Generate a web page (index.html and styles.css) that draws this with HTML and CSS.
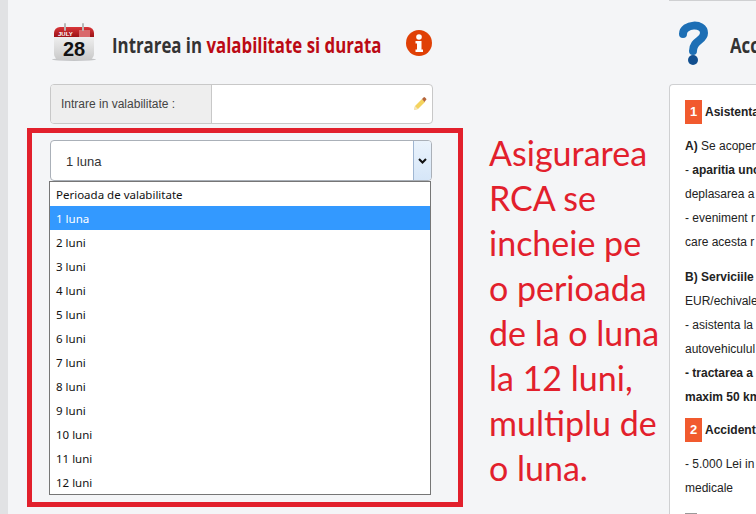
FILE: index.html
```html
<!DOCTYPE html>
<html lang="en">
<head>
    <meta charset="UTF-8">
    <meta name="viewport" content="width=device-width, initial-scale=1.0">
    <title>Asigurare RCA</title>
    <link rel="stylesheet" href="styles.css">
</head>
<body>
    <div class="page">
        <div class="col-left">
            <div class="heading">
                <svg class="icon-calendar" width="46" height="42" viewBox="0 0 46 42">
                    <defs>
                        <linearGradient id="calBody" x1="0" y1="0" x2="0" y2="1">
                            <stop offset="0" stop-color="#ffffff"/>
                            <stop offset="1" stop-color="#c9c9c9"/>
                        </linearGradient>
                        <linearGradient id="calTop" x1="0" y1="0" x2="0" y2="1">
                            <stop offset="0" stop-color="#d9363a"/>
                            <stop offset="1" stop-color="#9c1216"/>
                        </linearGradient>
                    </defs>
                    <ellipse cx="23" cy="37.500" rx="22" ry="1.500" fill="#c4c5c7"/>
                    <rect x="3" y="5" width="40" height="33" rx="6" fill="url(#calBody)"/>
                    <path d="M3 15V11a6 6 0 0 1 6-6h28a6 6 0 0 1 6 6v4z" fill="url(#calTop)"/>
                    <rect x="28" y="8" width="11" height="7" fill="#d9696b"/>
                    <rect x="13" y="1" width="2" height="8" rx="1" fill="#b8b8b8"/>
                    <rect x="31" y="1" width="2" height="8" rx="1" fill="#b8b8b8"/>
                    <text x="7" y="14" class="cal-month">JULY</text>
                    <text x="23" y="34" text-anchor="middle" class="cal-day">28</text>
                </svg>
                <div class="title-box">
                    <h2 class="title">Intrarea in <span class="title-red">valabilitate si durata</span></h2>
                </div>
                <svg class="icon-info" width="26" height="26" viewBox="0 0 26 26">
                    <circle cx="13" cy="13" r="13" fill="#e04006"/>
                    <circle cx="13" cy="7" r="2.800" fill="#fff"/>
                    <path d="M9.500 11h6v8.500h1.500V22H9.500v-2.500h1.500v-6H9.500z" fill="#fff"/>
                </svg>
            </div>

            <div class="input-group">
                <div class="input-label">Intrare in valabilitate :</div>
                <div class="input-field">
                    <svg width="14" height="14" viewBox="0 0 14 14">
                        <path d="M1 13l1-4 7-7 3 3-7 7z" fill="#f4d35e"/>
                        <path d="M9 2l1.500-1.500a1 1 0 0 1 1.500 0l1 1a1 1 0 0 1 0 1.500L11.500 5z" fill="#b5653a"/>
                        <path d="M1 13l1-4 3 3z" fill="#f3e4c0"/>
                    </svg>
                </div>
            </div>

            <div class="select-wrap">
                <div class="select-box">
                    <span class="select-value">1 luna</span>
                    <span class="select-arrow">
                        <svg width="9" height="6" viewBox="0 0 9 6">
                            <path d="M1 1l3.500 3.500L8 1" fill="none" stroke="#111" stroke-width="2"/>
                        </svg>
                    </span>
                </div>
                <ul class="select-list">
                    <li>Perioada de valabilitate</li>
                    <li class="active">1 luna</li>
                    <li>2 luni</li>
                    <li>3 luni</li>
                    <li>4 luni</li>
                    <li>5 luni</li>
                    <li>6 luni</li>
                    <li>7 luni</li>
                    <li>8 luni</li>
                    <li>9 luni</li>
                    <li>10 luni</li>
                    <li>11 luni</li>
                    <li>12 luni</li>
                </ul>
            </div>
        </div>

        <div class="col-right">
            <div class="heading heading-right">
                <svg class="icon-help" width="36" height="48" viewBox="0 0 36 48">
                    <path d="M8 15C8 5 29 3 29 14c0 8-11 7-11 18" fill="none" stroke="#f4f6f8" stroke-width="12" stroke-linecap="round"/>
                    <circle cx="18" cy="41" r="6.500" fill="#f4f6f8"/>
                    <path d="M8 15C8 5 29 3 29 14c0 8-11 7-11 18" fill="none" stroke="#1d6fb5" stroke-width="8" stroke-linecap="round"/>
                    <circle cx="18" cy="41" r="5" fill="#124f8f"/>
                </svg>
                <h2 class="title">Acc</h2>
            </div>
            <div class="panel">
                <div class="panel-head"><span class="badge">1</span><b>Asistenta</b></div>
                <p><b>A)</b> Se acoper</p>
                <p>- <b>aparitia unc</b></p>
                <p>deplasarea a</p>
                <p>- eveniment r</p>
                <p class="last">care acesta r</p>
                <p><b>B) Serviciile</b></p>
                <p>EUR/echivale</p>
                <p>- asistenta la</p>
                <p>autovehiculul</p>
                <p><b>- tractarea a</b></p>
                <p class="last last-b"><b>maxim 50 km</b></p>
                <div class="panel-head second"><span class="badge">2</span><b>Accident</b></div>
                <p>- 5.000 Lei in</p>
                <p>medicale</p>
                <div class="check"></div>
            </div>
        </div>
    </div>

    <div class="note-box"></div>
    <div class="note-text">Asigurarea<br>RCA se<br>incheie pe<br>o perioada<br>de la o luna<br>la 12 luni,<br>multiplu de<br>o luna.</div>
</body>
</html>
```

FILE: styles.css
```css
html, body {
    margin: 0;
    height: 100%;
    overflow: hidden;
}
body {
    font-family: "Liberation Sans", Arial, sans-serif;
    background-color: #f4f5f7;
    color: #333;
    border-left: 8px solid #e1e2e4;
    position: relative;
}
.page {
    display: flex;
    height: 514px;
    width: 748px;
}
.col-left {
    width: 383px;
    margin-left: 42px;
    flex-shrink: 0;
}
.col-right {
    width: 87px;
    margin-left: 236px;
    flex-shrink: 0;
    border-top: 1px solid #cfd0d2;
    height: 513px;
    overflow: hidden;
}
.heading {
    display: flex;
    align-items: center;
    height: 84px;
    padding-top: 3px;
    box-sizing: border-box;
}
.icon-calendar {
    margin-left: 1px;
    margin-right: 15px;
    margin-top: -2px;
    flex-shrink: 0;
}
.cal-month {
    font: bold 6px "Liberation Sans", sans-serif;
    fill: #fff;
}
.cal-day {
    font: bold 20px "Liberation Sans", sans-serif;
    fill: #111;
}
.title-box {
    width: 269px;
}
/* the original heading face is condensed, so squeeze a regular bold */
.title {
    margin: 0;
    font-family: "Open Sans", sans-serif;
    font-size: 22px;
    font-weight: bold;
    color: #333;
    white-space: nowrap;
    transform: scaleX(0.765);
    transform-origin: left center;
}
.title-red {
    color: #bb0a14;
}
.icon-info {
    margin-left: auto;
    margin-right: 1px;
    margin-top: -2px;
}
.input-group {
    display: flex;
    height: 40px;
    box-sizing: border-box;
    border: 1px solid #c8c8c8;
    border-radius: 4px;
    overflow: hidden;
    background-color: #fff;
    font-size: 12px;
}
.input-label {
    width: 161px;
    padding-left: 10px;
    box-sizing: border-box;
    background-color: #eee;
    border-right: 1px solid #c8c8c8;
    line-height: 38px;
    color: #444;
}
.input-field {
    flex: 1;
    display: flex;
    align-items: center;
    justify-content: flex-end;
    padding-right: 5px;
}
.select-wrap {
    position: relative;
    margin-top: 16px;
}
.select-box {
    display: flex;
    height: 41px;
    width: 382px;
    box-sizing: border-box;
    border: 1px solid #aab0b8;
    border-radius: 4px;
    background-color: #fff;
    font-size: 13px;
}
.select-value {
    flex: 1;
    line-height: 41px;
    padding-left: 15px;
}
.select-arrow {
    width: 17px;
    display: flex;
    align-items: center;
    justify-content: center;
    background: linear-gradient(#eaf3fc, #d6e6f8);
    border-left: 1px solid #9fb6d2;
    border-radius: 0 3px 3px 0;
}
.select-list {
    position: absolute;
    left: -1px;
    top: 41px;
    width: 382px;
    margin: 0;
    padding: 0;
    box-sizing: border-box;
    list-style: none;
    background-color: #fff;
    border: 1px solid #767676;
    font-family: "Noto Sans", sans-serif;
    font-size: 11.5px;
    color: #111;
}
.select-list li {
    height: 24px;
    line-height: 25px;
    padding-left: 6px;
}
.select-list .active {
    background-color: #3399ff;
    color: #fff;
}
.heading-right {
    height: 83px;
}
.icon-help {
    margin-left: 6px;
    margin-right: 19px;
    flex-shrink: 0;
    margin-top: -2px;
}
.panel {
    box-sizing: border-box;
    height: 440px;
    padding: 15px 0 0 15px;
    background-color: #fff;
    border: 1px solid #cfd0d2;
    border-right: 0;
    border-radius: 4px 0 0 0;
    font-size: 12px;
    color: #222;
    overflow: hidden;
    white-space: nowrap;
}
.panel p {
    margin: 0;
    height: 24px;
    line-height: 24px;
}
.panel p.last {
    margin-bottom: 11px;
}
.panel p.last-b {
    margin-bottom: 9px;
}
.panel-head {
    display: flex;
    align-items: center;
    height: 24px;
    margin-bottom: 10px;
}
.badge {
    flex-shrink: 0;
    width: 17px;
    height: 24px;
    line-height: 24px;
    margin-right: 3px;
    text-align: center;
    background-color: #f15a2e;
    color: #fff;
    font-weight: bold;
    font-size: 13px;
}
.check {
    margin-top: 13px;
    width: 12px;
    height: 12px;
    background-color: #999;
}
.note-box {
    position: absolute;
    left: 19px;
    top: 128px;
    width: 426px;
    height: 369px;
    border: 5px solid #e2202c;
}
.note-text {
    position: absolute;
    left: 481px;
    top: 130px;
    font-family: Lato, sans-serif;
    font-size: 34px;
    line-height: 45px;
    color: #e2202c;
    white-space: nowrap;
}
```
